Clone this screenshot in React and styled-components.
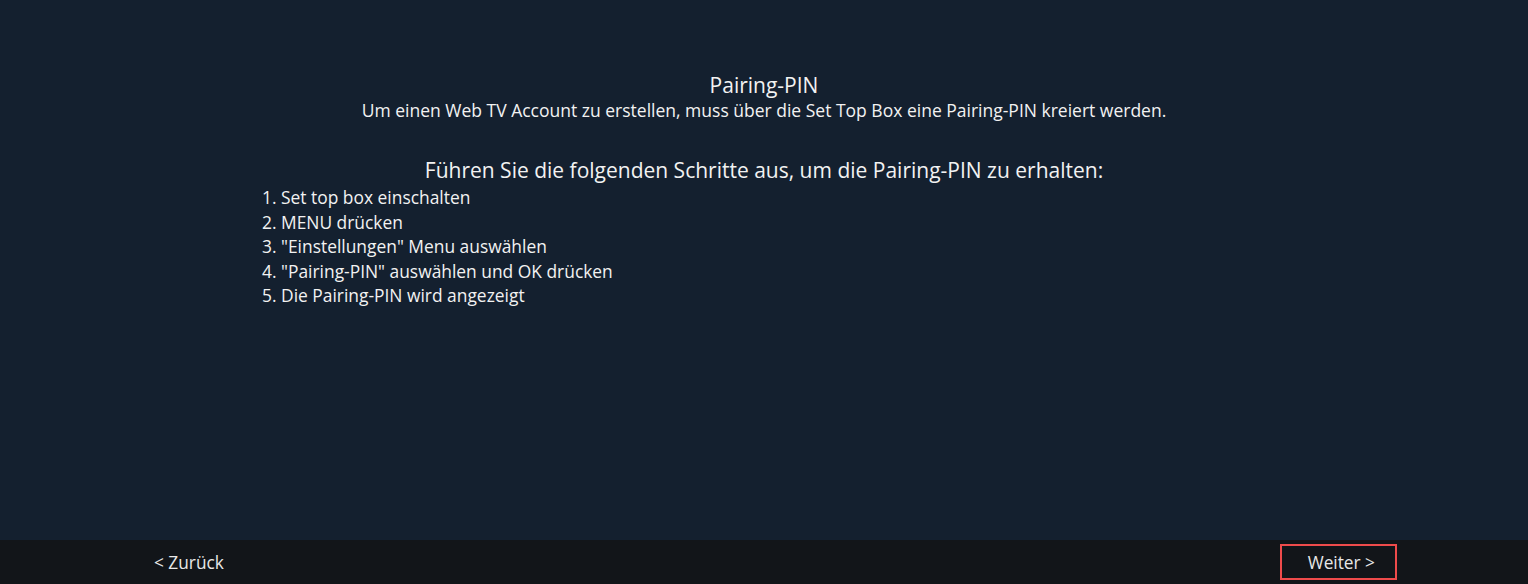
import React from "react";
import styled, { createGlobalStyle } from "styled-components";

const Global = createGlobalStyle`
  html, body { margin: 0; padding: 0; background: #14202f; }
  body { font-family: "Open Sans", "Noto Sans", sans-serif; color: #f2f2f2; }
`;

const Page = styled.div`
  width: 1528px;
  height: 584px;
  display: flex;
  flex-direction: column;
  background: #14202f;
`;

const Main = styled.main`
  flex: 1;
  display: flex;
  flex-direction: column;
  align-items: center;
  padding-top: 72px;
`;

const Title = styled.h1`
  margin: 0;
  font-size: 21px;
  font-weight: 400;
  line-height: 26px;
`;

const Sub = styled.p`
  margin: 0;
  font-size: 17.5px;
  line-height: 25px;
`;

const Steps = styled.section`
  width: 1004px;
  margin-top: 33px;
  display: flex;
  flex-direction: column;
`;

const StepsHead = styled.h2`
  margin: 0 0 1px;
  text-align: center;
  font-size: 21px;
  font-weight: 400;
  line-height: 28px;
`;

const List = styled.ol`
  margin: 0;
  padding: 0;
  list-style: none;
`;

const Item = styled.li`
  font-size: 17.4px;
  line-height: 24.5px;
`;

const Footer = styled.footer`
  height: 44px;
  background: #121519;
  display: flex;
  align-items: center;
  justify-content: space-between;
  padding: 0 131px 0 152px;
`;

const NavButton = styled.button`
  font-family: "Open Sans", sans-serif;
  font-size: 17.3px;
  line-height: 24px;
  color: #e8e8e8;
  background: transparent;
  border: 2px solid ${(p) => (p.$active ? "#ef4b4b" : "transparent")};
  padding: ${(p) => (p.$active ? "5px 20px 3px 26px" : "5px 0 3px")};
  cursor: pointer;
`;

const steps = [
  "1. Set top box einschalten",
  "2. MENU drücken",
  '3. "Einstellungen" Menu auswählen',
  '4. "Pairing-PIN" auswählen und OK drücken',
  "5. Die Pairing-PIN wird angezeigt",
];

export default function App() {
  return (
    <Page>
      <Global />
      <Main>
        <Title>Pairing-PIN</Title>
        <Sub>Um einen Web TV Account zu erstellen, muss über die Set Top Box eine Pairing-PIN kreiert werden.</Sub>
        <Steps>
          <StepsHead>Führen Sie die folgenden Schritte aus, um die Pairing-PIN zu erhalten:</StepsHead>
          <List>
            {steps.map((s) => (
              <Item key={s}>{s}</Item>
            ))}
          </List>
        </Steps>
      </Main>
      <Footer>
        <NavButton>&lt; Zurück</NavButton>
        <NavButton $active>Weiter &gt;</NavButton>
      </Footer>
    </Page>
  );
}
